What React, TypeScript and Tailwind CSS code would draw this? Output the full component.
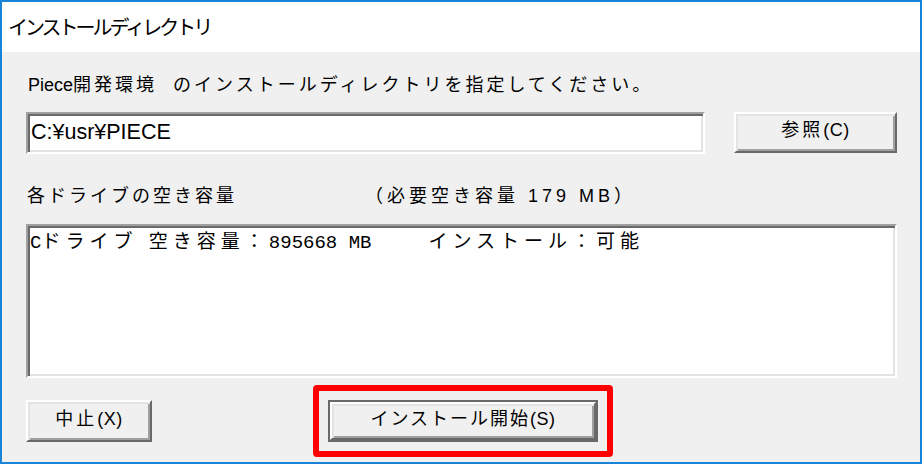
import React from "react";

const jp = "font-['Liberation_Sans','Noto_Sans_CJK_JP',sans-serif]";
const raised =
  "border-2 border-t-white border-l-white border-b-[#696969] border-r-[#696969] bg-[#f0f0f0] shadow-[inset_2px_2px_0_#e3e3e3,inset_-2px_-2px_0_#a0a0a0]";
const sunken =
  "border-2 border-t-[#a0a0a0] border-l-[#a0a0a0] border-b-white border-r-white bg-white shadow-[inset_2px_2px_0_#696969,inset_-2px_-2px_0_#e3e3e3]";

const listJp = "font-['Noto_Sans_CJK_JP',sans-serif] text-[19px] tracking-[5px]";
const listMono = "font-['Liberation_Mono',monospace] text-[19px]";

function WinButton({
  label,
  accel,
  track = "tracking-[3px]",
  className = "",
}: {
  label: string;
  accel: string;
  track?: string;
  className?: string;
}) {
  return (
    <div
      className={`${raised} ${className} flex items-center justify-center pb-[4px] text-[18px] text-black ${jp}`}
    >
      <span className={track}>{label}</span>
      <span className="tracking-[0.5px]">({accel})</span>
    </div>
  );
}

export default function App() {
  return (
    <div className="h-[466px] w-[924px] bg-white">
      <div className="flex h-[464px] w-[922px] flex-col border-2 border-[#1883d7] bg-[#f0f0f0]">
        {/* title bar */}
        <div className="flex h-[50px] items-center bg-white pl-[6px]">
          <span className="font-['Noto_Sans_CJK_JP',sans-serif] text-[20px] tracking-[-3px] text-black">
            インストールディレクトリ
          </span>
        </div>

        <div className="flex flex-1 flex-col pl-[24px] pr-[23px] pt-[21px]">
          <div className={`flex h-[24px] pl-[2px] text-[18px] leading-[24px] text-black ${jp}`}>
            <span>Piece</span>
            <span className="tracking-[3px]">開発環境</span>
            <span className="ml-[16px] tracking-[3px]">のインストールディレクトリを指定してください。</span>
          </div>

          <div className="mt-[15px] flex items-start">
            <div className={`${sunken} flex h-[42px] w-[679px] items-center pl-[3px]`}>
              <span className="font-['Liberation_Sans',sans-serif] text-[21.5px] leading-none text-black">
                C:¥usr¥PIECE
              </span>
            </div>
            <WinButton label="参照" accel="C" className="ml-[29px] h-[41px] w-[163px]" />
          </div>

          <div className={`mt-[30px] flex h-[24px] pl-[1px] text-[18px] leading-[24px] text-black ${jp}`}>
            <span className="w-[338px] tracking-[3px]">各ドライブの空き容量</span>
            <span className="tracking-[4px]">（必要空き容量 179 MB）</span>
          </div>

          <div className={`${sunken} mt-[16px] h-[154px] w-[871px] pl-[2px] pt-[2px]`}>
            <div className="whitespace-pre leading-[24px] text-black">
              <span className={listMono}>C</span>
              <span className={listJp}>ドライブ</span>
              <span className={listMono}> </span>
              <span className={listJp}>空き容量：</span>
              <span className={listMono}>895668 MB     </span>
              <span className={listJp}>インストール：可能</span>
            </div>
          </div>

          <div className="mt-[7px] flex items-center">
            <WinButton label="中止" accel="X" className="h-[42px] w-[126px]" />
            <div className="ml-[161px] rounded-[4px] border-[6px] border-[#ff0000] p-[9px]">
              <div className="border-2 border-[#696969]">
                <WinButton
                  label="インストール開始"
                  accel="S"
                  track="tracking-[2px]"
                  className="h-[38px] w-[266px]"
                />
              </div>
            </div>
          </div>
        </div>
      </div>
    </div>
  );
}
